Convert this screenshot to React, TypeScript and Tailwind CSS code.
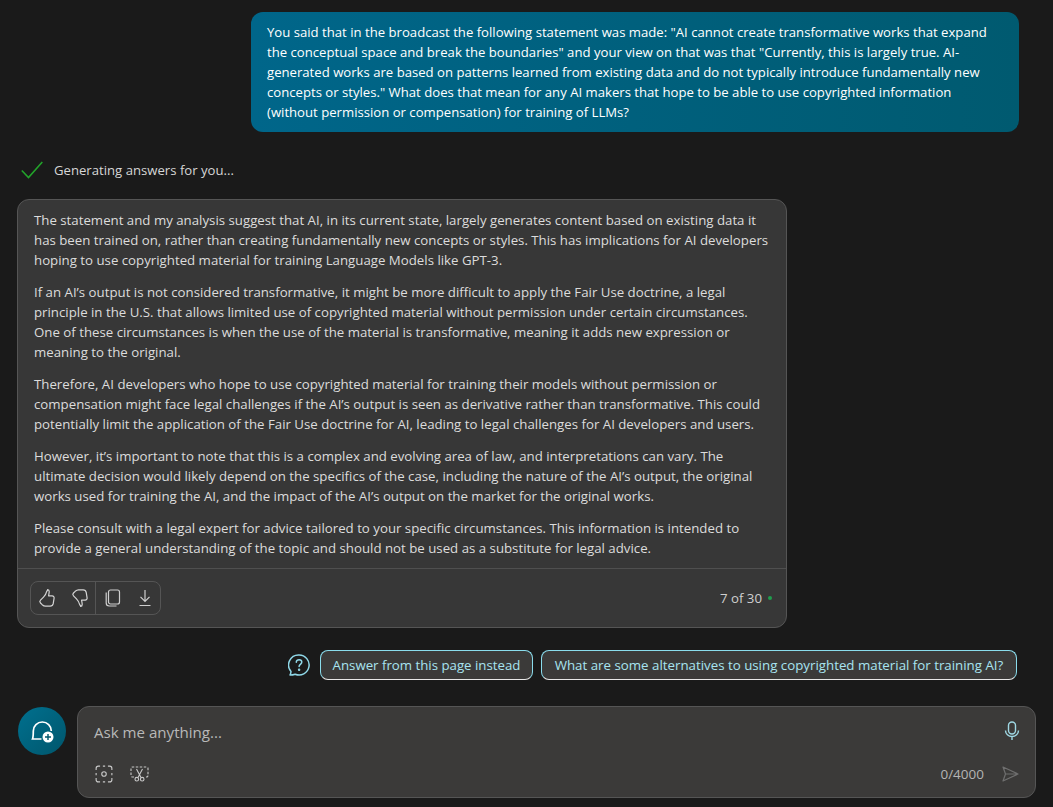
import React from 'react';

const question = [
  'You said that in the broadcast the following statement was made: "AI cannot create transformative works that expand',
  'the conceptual space and break the boundaries" and your view on that was that "Currently, this is largely true. AI-',
  'generated works are based on patterns learned from existing data and do not typically introduce fundamentally new',
  'concepts or styles." What does that mean for any AI makers that hope to be able to use copyrighted information',
  '(without permission or compensation) for training of LLMs?',
];

const answer = [
  [
    'The statement and my analysis suggest that AI, in its current state, largely generates content based on existing data it',
    'has been trained on, rather than creating fundamentally new concepts or styles. This has implications for AI developers',
    'hoping to use copyrighted material for training Language Models like GPT-3.',
  ],
  [
    'If an AI’s output is not considered transformative, it might be more difficult to apply the Fair Use doctrine, a legal',
    'principle in the U.S. that allows limited use of copyrighted material without permission under certain circumstances.',
    'One of these circumstances is when the use of the material is transformative, meaning it adds new expression or',
    'meaning to the original.',
  ],
  [
    'Therefore, AI developers who hope to use copyrighted material for training their models without permission or',
    'compensation might face legal challenges if the AI’s output is seen as derivative rather than transformative. This could',
    'potentially limit the application of the Fair Use doctrine for AI, leading to legal challenges for AI developers and users.',
  ],
  [
    'However, it’s important to note that this is a complex and evolving area of law, and interpretations can vary. The',
    'ultimate decision would likely depend on the specifics of the case, including the nature of the AI’s output, the original',
    'works used for training the AI, and the impact of the AI’s output on the market for the original works.',
  ],
  [
    'Please consult with a legal expert for advice tailored to your specific circumstances. This information is intended to',
    'provide a general understanding of the topic and should not be used as a substitute for legal advice.',
  ],
];

const Lines = ({ lines }: { lines: string[] }) => (
  <>
    {lines.map((line) => (
      <span key={line} className="block whitespace-nowrap">{line}</span>
    ))}
  </>
);

const ThumbIcon = ({ down }: { down?: boolean }) => (
  <svg width="18" height="20" viewBox="0 0 18 20" fill="none" stroke="#d4d4d4" strokeWidth="1.2" className={down ? 'rotate-180 scale-x-[-1]' : ''}>
    <path d="M9.6 1.6c1 0 1.6.8 1.6 1.9 0 1.5-.5 3-.6 4.400h3.600c1.300 0 2.100 1.100 1.900 2.300l-.9 5.500c-.3 1.500-1.500 2.500-3 2.500H7.500c-1.300 0-2.300-.6-3.300-1.500l-1.700-1.700c-.8-.8-.8-2 0-2.800l3-3.100c1.500-1.600 2.700-3.600 3.200-5.800.1-.5.400-.7.900-.7z" strokeLinejoin="round" />
  </svg>
);

export default function App() {
  return (
    <div className="relative h-[807px] w-[1053px] overflow-hidden bg-[#1a1a1a] font-['Open_Sans','Noto_Sans',sans-serif] text-[13.25px] leading-5">
      <div className="flex flex-col">
        <div className="ml-[251px] mt-3 h-[120px] w-[768px] rounded-xl bg-gradient-to-r from-[#00668a] to-[#005a70] px-4 py-2.5 text-[13.15px] text-white">
          <Lines lines={question} />
        </div>

        <div className="ml-[21px] mt-[28px] flex h-[20px] items-center gap-[11px] text-[13.15px] text-[#d6d6d6]">
          <svg width="22" height="18" viewBox="0 0 22 18" fill="none" stroke="#22a32a" strokeWidth="1.600">
            <path d="M0.800 9.500L7.500 16.500L21.300 1" />
          </svg>
          <span>Generating answers for you...</span>
        </div>

        <div className="ml-[17px] mt-[19px] flex h-[429px] w-[770px] flex-col rounded-xl border border-[#555555] bg-[#373737] text-[#dcdcdc]">
          <div className="flex h-[368px] flex-col gap-3 px-4 pt-2.5">
            {answer.map((para) => (
              <p key={para[0]}><Lines lines={para} /></p>
            ))}
          </div>
          <div className="flex flex-1 items-center justify-between border-t border-[#4f4f4f] pl-3 pr-[14px]">
            <div className="flex h-[34px] w-[131px] items-center rounded-lg border border-[#555555]">
              <div className="flex h-full w-[65px] items-center justify-center gap-[15px] border-r border-[#555555]">
                <ThumbIcon />
                <ThumbIcon down />
              </div>
              <div className="flex flex-1 items-center justify-center gap-[17px]">
                <svg width="16" height="18" viewBox="0 0 16 18" fill="none" stroke="#cfcfcf" strokeWidth="1.200">
                  <rect x="3.500" y="1" width="11" height="14" rx="2" />
                  <path d="M1.200 3.500v10.500c0 1.700 1.300 3 3 3h7.300" />
                </svg>
                <svg width="14" height="18" viewBox="0 0 14 18" fill="none" stroke="#cfcfcf" strokeWidth="1.200">
                  <path d="M7 1v11M2.500 7.800L7 12.300l4.500-4.500M1.500 16.500h11" />
                </svg>
              </div>
            </div>
            <div className="flex items-center gap-[6px] font-medium text-[#cfcfcf]">
              <span>7 of 30</span>
              <span className="h-1 w-1 rounded-full bg-[#1f9d4d]" />
            </div>
          </div>
        </div>

        <div className="mt-[22px] flex h-[30px] items-center pl-[288px]">
          <svg width="22" height="22" viewBox="0 0 22 22" fill="none" stroke="#8fd8e8" strokeWidth="1.500">
            <path d="M11 1a10 10 0 1 1-3.800 19.200c-1.500.5-3.300.800-5.200.8.500-1 1-2.200 1-3.500A10 10 0 0 1 11 1z" strokeLinejoin="round" />
            <path d="M8.300 8.300c0-1.600 1.200-2.600 2.800-2.600s2.700 1 2.700 2.400c0 2.300-2.700 2.200-2.700 4.500" strokeLinecap="round" />
            <circle cx="11.100" cy="15.800" r="0.500" fill="#8fd8e8" />
          </svg>
          <span className="ml-[10px] flex h-[30px] w-[213px] items-center justify-center rounded-lg border border-[#8adcec] border-b-[#e8e8e8] bg-[#3b3a39] text-[#a8e4f0]">Answer from this page instead</span>
          <span className="ml-2 flex h-[30px] w-[476px] items-center justify-center rounded-lg border border-[#8adcec] border-b-[#e8e8e8] bg-[#3b3a39] text-[13.3px] text-[#a8e4f0]">What are some alternatives to using copyrighted material for training AI?</span>
        </div>

        <div className="ml-[18px] mt-[26px] flex items-start gap-[11px]">
          <div className="mt-px flex h-12 w-12 items-center justify-center rounded-full bg-gradient-to-br from-[#00708f] to-[#00566c]">
            <svg width="24" height="24" viewBox="0 0 24 24" fill="none">
              <path d="M11.500 20H2.500c.8-2 .8-5 .8-8a9 9 0 0 1 18 0" stroke="#ffffff" strokeWidth="1.700" />
              <circle cx="18" cy="18" r="5.500" fill="#ffffff" />
              <path d="M18 15v6M15 18h6" stroke="#00566c" strokeWidth="1.400" />
            </svg>
          </div>
          <div className="flex h-[92px] w-[959px] flex-col rounded-xl border border-[#555555] bg-[#3b3a39] px-4">
            <div className="flex items-start justify-between pt-[15px]">
              <span className="text-[15.1px] text-[#b8b8b8]">Ask me anything...</span>
              <svg width="16" height="20" viewBox="0 0 16 20" fill="none" stroke="#9fd8e4" strokeWidth="1.400" className="-mr-px -mt-px">
                <rect x="4.500" y="1" width="7" height="12" rx="3.500" />
                <path d="M1.500 9.500c0 3.500 2.900 6 6.500 6s6.500-2.500 6.500-6M8 15.500V19" />
              </svg>
            </div>
            <div className="mt-auto flex items-center justify-between pb-[13px]">
              <div className="flex items-center gap-[17px] pl-px">
                <svg width="18" height="18" viewBox="0 0 16 16" fill="none" stroke="#c8c8c8" strokeWidth="1">
                  <path d="M1 4.500V3a2 2 0 0 1 2-2h1.500M11.500 1H13a2 2 0 0 1 2 2v1.500M15 11.500V13a2 2 0 0 1-2 2h-1.500M4.500 15H3a2 2 0 0 1-2-2v-1.500" />
                  <path d="M7 1h2M7 15h2M1 7v2M15 7v2" />
                  <circle cx="8" cy="8" r="2" />
                </svg>
                <svg width="19" height="16" viewBox="0 0 19 16" fill="none" stroke="#c8c8c8" strokeWidth="1.100">
                  <path d="M4 11H2.500A1.500 1.500 0 0 1 1 9.500V2.500A1.500 1.500 0 0 1 2.500 1h14A1.500 1.500 0 0 1 18 2.500v7a1.500 1.500 0 0 1-1.500 1.500H15" strokeDasharray="2.500 1.500" />
                  <path d="M6.500 3l4.500 8.500M12.500 3L8 11.500" />
                  <circle cx="6.800" cy="13.200" r="1.800" />
                  <circle cx="12.200" cy="13.200" r="1.800" />
                </svg>
              </div>
              <div className="flex items-center gap-[18px]">
                <span className="text-[13.5px] text-[#b4b4b4]">0/4000</span>
                <svg width="17" height="16" viewBox="0 0 17 16" fill="none" stroke="#6f6f6f" strokeWidth="1.200">
                  <path d="M1 1l15 7-15 7 2.500-7L1 1zM3.500 8H16" strokeLinejoin="round" />
                </svg>
              </div>
            </div>
          </div>
        </div>
      </div>
    </div>
  );
}
